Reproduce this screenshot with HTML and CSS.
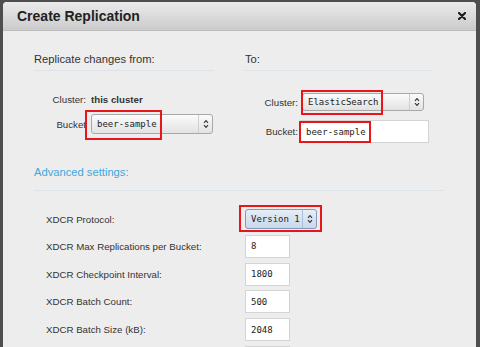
FILE: index.html
```html
<!DOCTYPE html>
<html lang="en">
<head>
  <meta charset="UTF-8" />
  <title>Create Replication</title>
  <link rel="stylesheet" href="styles.css">
</head>
<body>
  <div class="dialog">
    <div class="dialog-header">
      <h1>Create Replication</h1>
      <span class="close">
        <svg width="8" height="8" viewBox="0 0 8 8"><path d="M1 1 L7 7 M7 1 L1 7" stroke="#1e1e1e" stroke-width="2.2" stroke-linecap="round"/></svg>
      </span>
    </div>

    <div class="dialog-body">
      <div class="cols">
        <div class="col">
          <div class="col-title">Replicate changes from:</div>
          <div class="fields from">
            <span class="label">Cluster:</span>
            <strong class="value">this cluster</strong>
            <span class="label">Bucket</span>
            <div class="select wide tall">
              <span class="select-value">beer-sample</span>
              <span class="select-arrow"><svg width="6" height="10" viewBox="0 0 6 10"><path d="M1 3.8 L3 1.6 L5 3.8 M1 6.2 L3 8.4 L5 6.2" fill="none" stroke="#333" stroke-width="1.1"/></svg></span>
            </div>
          </div>
        </div>
        <div class="col">
          <div class="col-title">To:</div>
          <div class="fields to">
            <span class="label">Cluster:</span>
            <div class="select wide">
              <span class="select-value">ElasticSearch</span>
              <span class="select-arrow"><svg width="6" height="10" viewBox="0 0 6 10"><path d="M1 3.8 L3 1.6 L5 3.8 M1 6.2 L3 8.4 L5 6.2" fill="none" stroke="#333" stroke-width="1.1"/></svg></span>
            </div>
            <span class="label">Bucket:</span>
            <input class="text bucket" type="text" value="beer-sample">
          </div>
        </div>
      </div>

      <div class="adv-title">Advanced settings:</div>

      <div class="settings">
        <span class="label">XDCR Protocol:</span>
        <div class="select version">
          <span class="select-value">Version 1</span>
          <span class="select-arrow"><svg width="6" height="10" viewBox="0 0 6 10"><path d="M1 3.8 L3 1.6 L5 3.8 M1 6.2 L3 8.4 L5 6.2" fill="none" stroke="#333" stroke-width="1.1"/></svg></span>
        </div>
        <span class="label">XDCR Max Replications per Bucket:</span>
        <input class="text num" type="text" value="8">
        <span class="label">XDCR Checkpoint Interval:</span>
        <input class="text num" type="text" value="1800">
        <span class="label">XDCR Batch Count:</span>
        <input class="text num" type="text" value="500">
        <span class="label">XDCR Batch Size (kB):</span>
        <input class="text num" type="text" value="2048">
        <span class="label"></span>
        <input class="text num" type="text">
      </div>
    </div>

    <!-- red highlight marks drawn over the form -->
    <div class="mark" style="left:82px;top:108px;width:73px;height:26px"></div>
    <div class="mark" style="left:298px;top:88px;width:78px;height:21px"></div>
    <div class="mark" style="left:296px;top:119px;width:68px;height:18px"></div>
    <div class="mark" style="left:236px;top:203px;width:79px;height:23px"></div>
  </div>
</body>
</html>
```

FILE: styles.css
```css
html, body {
  margin: 0;
  padding: 0;
  height: 100%;
  background: #4e4e4e;
  font-family: 'Liberation Sans', Arial, sans-serif;
  color: #333;
  overflow: hidden;
}

.dialog {
  position: relative;
  margin: 2px 4px 0 3px;
  height: 345px;
  background: #ededed;
  border-radius: 4px 4px 0 0;
  overflow: hidden;
}

.dialog-header {
  display: flex;
  align-items: center;
  justify-content: space-between;
  height: 28px;
  padding: 0 10px 0 14px;
  background: linear-gradient(#ebebeb, #cbcbcb);
  border-bottom: 1px solid #bdbdbd;
}

.dialog-header h1 {
  margin: 0;
  font-size: 14px;
  font-weight: bold;
  color: #222;
}

.close {
  display: flex;
}

.dialog-body {
  padding: 20px 32px 0 31px;
}

.cols {
  display: grid;
  grid-template-columns: 180px 187px;
  column-gap: 31px;
  align-items: start;
}

.col-title {
  font-size: 11.2px;
  line-height: 16px;
  padding-bottom: 3px;
  border-bottom: 1px solid #dbe2e8;
}

.fields {
  display: grid;
  grid-template-columns: 52px auto;
  align-items: center;
  font-size: 9.7px;
}

.fields .label {
  text-align: right;
}

.fields.from {
  margin-top: 20px;
  column-gap: 5px;
  row-gap: 7px;
  grid-template-rows: 16px 20px;
}

.fields.to {
  margin-top: 22px;
  column-gap: 2px;
  row-gap: 9px;
  grid-template-columns: 53px auto;
}

.fields.to .select {
  margin-left: 2px;
}

.select {
  display: flex;
  align-items: stretch;
  height: 18px;
  box-sizing: border-box;
  border: 1px solid #a8a8a8;
  border-radius: 3px;
  background: linear-gradient(#fbfbfb, #e2e2e2);
  font-family: 'DejaVu Sans Mono', monospace;
  font-size: 9px;
  color: #222;
}

.select.tall {
  height: 20px;
}

.select.wide {
  width: 122px;
}

.select-value {
  flex: 1;
  display: flex;
  align-items: center;
  padding-left: 5px;
}

.select-arrow {
  width: 13px;
  display: flex;
  align-items: center;
  justify-content: center;
  border-left: 1px solid #cfcfcf;
}

.select.version {
  width: 72px;
  height: 20px;
  border-color: #7f9cc0;
  background: linear-gradient(#e6eef7, #c9d8ea);
}

.select.version .select-arrow {
  border-left-color: #a9bed8;
}

.text {
  box-sizing: border-box;
  height: 23px;
  margin: 0;
  padding: 0 0 0 5px;
  border: 1px solid #d4d4d4;
  background: #fff;
  font-family: 'DejaVu Sans Mono', monospace;
  font-size: 9px;
  color: #222;
  outline: none;
}

.text.bucket {
  width: 129px;
}

.text.num {
  width: 45px;
}

.adv-title {
  margin-top: 21px;
  font-size: 11.2px;
  line-height: 16px;
  color: #3ea7db;
  padding-bottom: 10px;
  border-bottom: 1px solid #dbe2e8;
}

.settings {
  display: grid;
  grid-template-columns: 199px auto;
  align-items: center;
  justify-items: start;
  row-gap: 4.75px;
  margin-top: 18px;
  padding-left: 12px;
  font-size: 9.7px;
}

.settings .select {
  margin-bottom: 1px;
}

.mark {
  position: absolute;
  border: 2px solid #e8161b;
  pointer-events: none;
}
```
